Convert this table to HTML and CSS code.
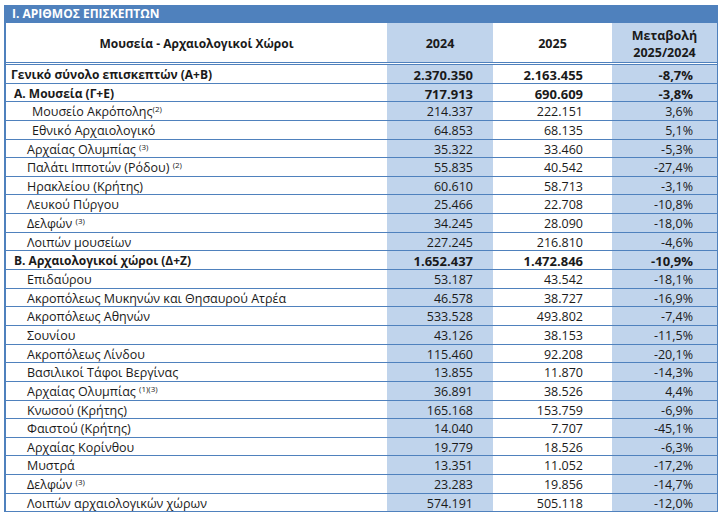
FILE: index.html
```html
<!DOCTYPE html>
<html lang="el">
<head>
<meta charset="utf-8">
<title>Αριθμός επισκεπτών</title>
<link rel="stylesheet" href="styles.css">
</head>
<body>
<div class="sheet">
  <div class="title">I. ΑΡΙΘΜΟΣ ΕΠΙΣΚΕΠΤΩΝ</div>
  <div class="table">
    <div class="row head">
      <div class="c name">Μουσεία - Αρχαιολογικοί Χώροι</div>
      <div class="c n blue">2024</div>
      <div class="c n">2025</div>
      <div class="c n blue">Μεταβολή<br>2025/2024</div>
    </div>
    <div class="row bold">
      <div class="c name l0">Γενικό σύνολο επισκεπτών (Α+Β)</div>
      <div class="c v blue p1">2.370.350</div>
      <div class="c v p2">2.163.455</div>
      <div class="c v blue p3">-8,7%</div>
    </div>
    <div class="row bold">
      <div class="c name l1">Α. Μουσεία (Γ+Ε)</div>
      <div class="c v blue p1">717.913</div>
      <div class="c v p2">690.609</div>
      <div class="c v blue p3">-3,8%</div>
    </div>
    <div class="row">
      <div class="c name l3">Μουσείο Ακρόπολης<sup>(2)</sup></div>
      <div class="c v blue p1">214.337</div>
      <div class="c v p2">222.151</div>
      <div class="c v blue p3">3,6%</div>
    </div>
    <div class="row">
      <div class="c name l3">Εθνικό Αρχαιολογικό</div>
      <div class="c v blue p1">64.853</div>
      <div class="c v p2">68.135</div>
      <div class="c v blue p3">5,1%</div>
    </div>
    <div class="row">
      <div class="c name l2">Αρχαίας Ολυμπίας <sup>(3)</sup></div>
      <div class="c v blue p1">35.322</div>
      <div class="c v p2">33.460</div>
      <div class="c v blue p3">-5,3%</div>
    </div>
    <div class="row">
      <div class="c name l2">Παλάτι Ιπποτών (Ρόδου) <sup>(2)</sup></div>
      <div class="c v blue p1">55.835</div>
      <div class="c v p2">40.542</div>
      <div class="c v blue p3">-27,4%</div>
    </div>
    <div class="row">
      <div class="c name l2">Ηρακλείου (Κρήτης)</div>
      <div class="c v blue p1">60.610</div>
      <div class="c v p2">58.713</div>
      <div class="c v blue p3">-3,1%</div>
    </div>
    <div class="row">
      <div class="c name l2">Λευκού Πύργου</div>
      <div class="c v blue p1">25.466</div>
      <div class="c v p2">22.708</div>
      <div class="c v blue p3">-10,8%</div>
    </div>
    <div class="row">
      <div class="c name l2">Δελφών <sup>(3)</sup></div>
      <div class="c v blue p1">34.245</div>
      <div class="c v p2">28.090</div>
      <div class="c v blue p3">-18,0%</div>
    </div>
    <div class="row">
      <div class="c name l2">Λοιπών μουσείων</div>
      <div class="c v blue p1">227.245</div>
      <div class="c v p2">216.810</div>
      <div class="c v blue p3">-4,6%</div>
    </div>
    <div class="row bold">
      <div class="c name l1">Β. Αρχαιολογικοί χώροι (Δ+Ζ)</div>
      <div class="c v blue p1">1.652.437</div>
      <div class="c v p2">1.472.846</div>
      <div class="c v blue p3">-10,9%</div>
    </div>
    <div class="row">
      <div class="c name l2">Επιδαύρου</div>
      <div class="c v blue p1">53.187</div>
      <div class="c v p2">43.542</div>
      <div class="c v blue p3">-18,1%</div>
    </div>
    <div class="row">
      <div class="c name l2">Ακροπόλεως Μυκηνών και Θησαυρού Ατρέα</div>
      <div class="c v blue p1">46.578</div>
      <div class="c v p2">38.727</div>
      <div class="c v blue p3">-16,9%</div>
    </div>
    <div class="row">
      <div class="c name l2">Ακροπόλεως Αθηνών</div>
      <div class="c v blue p1">533.528</div>
      <div class="c v p2">493.802</div>
      <div class="c v blue p3">-7,4%</div>
    </div>
    <div class="row">
      <div class="c name l2">Σουνίου</div>
      <div class="c v blue p1">43.126</div>
      <div class="c v p2">38.153</div>
      <div class="c v blue p3">-11,5%</div>
    </div>
    <div class="row">
      <div class="c name l2">Ακροπόλεως Λίνδου</div>
      <div class="c v blue p1">115.460</div>
      <div class="c v p2">92.208</div>
      <div class="c v blue p3">-20,1%</div>
    </div>
    <div class="row">
      <div class="c name l2">Βασιλικοί Τάφοι Βεργίνας</div>
      <div class="c v blue p1">13.855</div>
      <div class="c v p2">11.870</div>
      <div class="c v blue p3">-14,3%</div>
    </div>
    <div class="row">
      <div class="c name l2">Αρχαίας Ολυμπίας <sup>(1)(3)</sup></div>
      <div class="c v blue p1">36.891</div>
      <div class="c v p2">38.526</div>
      <div class="c v blue p3">4,4%</div>
    </div>
    <div class="row">
      <div class="c name l2">Κνωσού (Κρήτης)</div>
      <div class="c v blue p1">165.168</div>
      <div class="c v p2">153.759</div>
      <div class="c v blue p3">-6,9%</div>
    </div>
    <div class="row">
      <div class="c name l2">Φαιστού (Κρήτης)</div>
      <div class="c v blue p1">14.040</div>
      <div class="c v p2">7.707</div>
      <div class="c v blue p3">-45,1%</div>
    </div>
    <div class="row">
      <div class="c name l2">Αρχαίας Κορίνθου</div>
      <div class="c v blue p1">19.779</div>
      <div class="c v p2">18.526</div>
      <div class="c v blue p3">-6,3%</div>
    </div>
    <div class="row">
      <div class="c name l2">Μυστρά</div>
      <div class="c v blue p1">13.351</div>
      <div class="c v p2">11.052</div>
      <div class="c v blue p3">-17,2%</div>
    </div>
    <div class="row">
      <div class="c name l2">Δελφών <sup>(3)</sup></div>
      <div class="c v blue p1">23.283</div>
      <div class="c v p2">19.856</div>
      <div class="c v blue p3">-14,7%</div>
    </div>
    <div class="row">
      <div class="c name l2">Λοιπών αρχαιολογικών χώρων</div>
      <div class="c v blue p1">574.191</div>
      <div class="c v p2">505.118</div>
      <div class="c v blue p3">-12,0%</div>
    </div>
  </div>
</div>
</body>
</html>
```
FILE: styles.css
```css
html, body {
  margin: 0;
  padding: 0;
  background: #ffffff;
}
body {
  font-family: "Open Sans", "Noto Sans", sans-serif;
  font-size: 12.5px;
  color: #1a1a1a;
}
.sheet {
  margin: 5px 0 0 4px;
  width: 714px;
}
.title {
  height: 18px;
  background: #4f81bd;
  color: #ffffff;
  font-weight: 700;
  font-size: 12px;
  line-height: 18px;
  padding-left: 8px;
}
.table {
  border-left: 2px solid #4f81bd;
  border-right: 1px solid #4f81bd;
}
.row {
  display: grid;
  grid-template-columns: 381px 106px 119px 105px;
  height: 18.65px;
  box-sizing: border-box;
  border-bottom: 1px solid #4f81bd;
}
.row.head {
  height: 42px;
  border-bottom: 3px double #4f81bd;
}
.c {
  white-space: nowrap;
  overflow: hidden;
  line-height: 18px;
  padding-top: 1px;
  box-sizing: border-box;
}
.head .c {
  display: flex;
  align-items: center;
  justify-content: center;
  text-align: center;
  font-weight: 700;
  font-size: 12.5px;
  line-height: 17px;
  padding-top: 2px;
}
.head .name {
  font-size: 12px;
}
.blue {
  background: #c0d4ec;
}
.v {
  text-align: right;
}
.p1 { padding-right: 20px; }
.p2 { padding-right: 29px; }
.p3 { padding-right: 24px; }
.bold .c {
  font-weight: 700;
  font-size: 13px;
}
.bold .name {
  font-size: 12px;
}
.l0 { padding-left: 5px; }
.l1 { padding-left: 8px; }
.l2 { padding-left: 21px; }
.l3 { padding-left: 26px; }
sup {
  font-size: 8px;
  line-height: 0;
  vertical-align: 4px;
}
```
